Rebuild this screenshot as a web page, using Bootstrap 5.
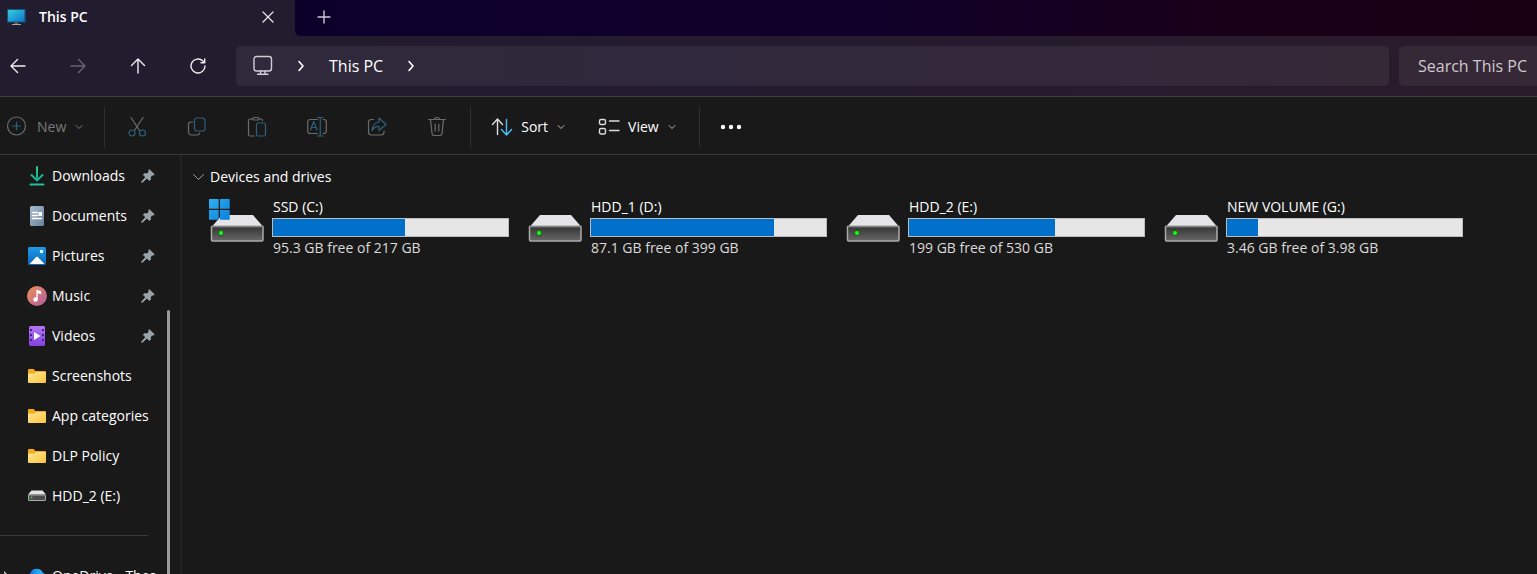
<!DOCTYPE html>
<html lang="en" data-bs-theme="dark">
<head>
<meta charset="utf-8">
<meta name="viewport" content="width=device-width, initial-scale=1">
<title>This PC</title>
<link href="https://cdn.jsdelivr.net/npm/bootstrap@5.3.0/dist/css/bootstrap.min.css" rel="stylesheet">
<style>
  body { font-family: "Open Sans", "Noto Sans", sans-serif; font-size: 14px; line-height: 20px; color: #fff; background: #191919; }
  svg { display: block; flex: none; fill: none; stroke-linecap: round; stroke-linejoin: round; }
  button, .crumb { border: 0; padding: 0; background: none; color: inherit; text-decoration: none; }
  .window-top { background: linear-gradient(90deg, #211d2e 0%, #241b30 45%, #2a1b2a 100%); border-bottom: 1px solid #403f42; }
  .tab-strip { height: 36px; }
  .tab-item { width: 295px; padding: 0 20px 3px 7px; font-weight: 600; }
  .tab-item svg { stroke-width: 1.2; }
  .tab-rest { background: linear-gradient(90deg, #0c002a 0%, #10002a 45%, #190019 75%, #180012 100%); border-bottom-left-radius: 5px; padding: 0 22px 2px; }
  .nav-row { height: 60px; gap: 10px; }
  .nav-tools { width: 226px; padding-left: 7px; gap: 38px; }
  .field { background: rgba(255,255,255,.06); border-radius: 5px; height: 40px; font-size: 16px; }
  .address { padding: 0 0 0 16px; gap: 20px; }
  .search-box { width: 138px; border-radius: 5px 0 0 5px; border: 0; padding: 0 0 0 19px; color: #cfcad0; outline: 0; }
  .search-box::placeholder { color: #cfcad0; opacity: 1; }
  .command-bar { height: 58px; padding-top: 3px; border-bottom: 1px solid #3a3a3a; }
  .command-bar button:disabled { color: #7b7b7b; }
  .new-button { padding: 0 16px 0 5px; }
  .rule { width: 1px; height: 40px; background: #303030; }
  .edit-tools { gap: 40px; padding: 0 23px 0 22px; }
  .view-tools { gap: 32px; padding: 0 22px 0 20px; }
  .side { width: 182px; border-right: 2px solid #222; background: #191919; }
  .side-link { height: 40px; padding: 1px 25px 0 27px; gap: 5px; color: #fff; text-decoration: none; white-space: nowrap; }
  .side-link .pin { margin-left: auto; }
  .side-rule { width: 148px; height: 1px; margin: 20px 0 19px; background: #3a3a3a; }
  .side .cloud { padding-left: 4px; padding-right: 0; width: 159px; overflow: hidden; }
  .thumb { top: 155px; right: 10px; bottom: 0; width: 3px; background: #9a9a9a; border-radius: 2px 2px 0 0; }
  .pane { padding: 12px 10px; }
  .group-title { font-size: 14px; line-height: 20px; font-weight: 400; margin: 0 0 10px; }
  .group-title button { gap: 5px; }
  .drive-list { padding-left: 17px; row-gap: 10px; }
  .drive { width: 318px; gap: 7px; padding-right: 18px; }
  .drive > svg { margin-top: 2px; }
  .drive-text { padding-left: 1px; }
  .meter { height: 19px; margin: 1px 0; border: 1px solid #bcbcbc; border-radius: 0; background: #e6e6e6; }
  .meter .progress-bar { background: #0070cb; }
  .free { color: #dadada; }
</style>
</head>
<body class="vh-100 overflow-hidden d-flex flex-column">

<svg width="0" height="0" class="position-absolute" aria-hidden="true">
  <defs>
    <linearGradient id="gFront" x1="0" y1="0" x2="0" y2="1"><stop offset="0" stop-color="#343434"/><stop offset="1" stop-color="#686868"/></linearGradient>
    <linearGradient id="gWin" x1="0" y1="0" x2="1" y2="1"><stop offset="0" stop-color="#2eb1f0"/><stop offset="1" stop-color="#0a7fdc"/></linearGradient>
    <linearGradient id="gScreen" x1="0" y1="0" x2="1" y2="1"><stop offset="0" stop-color="#35d4e2"/><stop offset="1" stop-color="#0d71c8"/></linearGradient>
    <linearGradient id="gFolder" x1="0" y1="0" x2="1" y2="1"><stop offset="0" stop-color="#ffe79a"/><stop offset="1" stop-color="#fcc43c"/></linearGradient>
    <linearGradient id="gDoc" x1="0" y1="0" x2="1" y2="1"><stop offset="0" stop-color="#a9bccf"/><stop offset="1" stop-color="#67829d"/></linearGradient>
    <linearGradient id="gPic" x1="0" y1="0" x2="0" y2="1"><stop offset="0" stop-color="#1c9be6"/><stop offset="1" stop-color="#0b66bd"/></linearGradient>
    <linearGradient id="gMusic" x1="0" y1="0" x2="1" y2="1"><stop offset="0" stop-color="#f5924f"/><stop offset="1" stop-color="#ab5ba8"/></linearGradient>
    <linearGradient id="gVideo" x1="0" y1="0" x2="0" y2="1"><stop offset="0" stop-color="#b276f2"/><stop offset="1" stop-color="#8140e0"/></linearGradient>
    <linearGradient id="gDown" x1="0" y1="0" x2="0" y2="1"><stop offset="0" stop-color="#2bd08a"/><stop offset="1" stop-color="#17a99a"/></linearGradient>
    <linearGradient id="gCloud" x1="0" y1="0" x2="1" y2="0"><stop offset="0" stop-color="#1558c8"/><stop offset=".5" stop-color="#22a0f0"/><stop offset="1" stop-color="#35b8fa"/></linearGradient>
  </defs>
  <symbol id="drive" viewBox="0 0 56 44">
    <path d="M13 16h31l10 11.500H3z" fill="#e3e3e8"/>
    <path d="M2.500 27.500h51.500v13.500q0 1-1 1h-49.500q-1 0-1-1z" fill="url(#gFront)" stroke="#aaa" stroke-width="1.500"/>
    <path d="M3 27.300h50.500" stroke="#777" stroke-width="1"/>
    <circle cx="12" cy="34" r="3" fill="#176c17"/><circle cx="12" cy="34" r="2" fill="#2af02a"/>
  </symbol>
  <symbol id="pin" viewBox="0 0 14 14">
    <path d="M8.500.8l4.700 4.700-1.200.6-.7-.1-2 2 .1 2.500-1 1-2.500-2.400L1.600 13l-.9.400.3-1L4.700 8.200 2.400 5.800l1-1 2.600.1 2-2-.1-.8z" fill="#9aa4ab" stroke="#9aa4ab"/>
  </symbol>
  <symbol id="folder" viewBox="0 0 20 20">
    <path d="M1 5V4q0-1 1-1h4.500L8.500 5H18q1 0 1 1v2H1z" fill="#f5ab14"/>
    <path d="M1 7.500h6.500L9 6h10v10q0 1-1 1H2q-1 0-1-1z" fill="url(#gFolder)"/>
  </symbol>
  <symbol id="chev" viewBox="0 0 8 6"><path d="M1 1.500l3 3 3-3"/></symbol>
</svg>

<header class="window-top">
  <div class="tab-strip d-flex">
    <div class="tab-item d-flex align-items-center">
      <svg width="20" height="18" viewBox="0 0 20 18"><rect x=".5" y="1.500" width="17.500" height="12.500" fill="url(#gScreen)" stroke="#14567f"/><path d="M7.500 14.500h3.500v1.500h-3.500z" fill="#62696e"/><path d="M5.500 16.500h8" stroke="#a4abb0"/></svg>
      <span class="ms-2 ps-1">This PC</span>
      <button type="button" class="ms-auto" aria-label="Close tab"><svg width="14" height="14" viewBox="0 0 14 14" stroke="#e8e8e8"><path d="M2 2l10 10M12 2L2 12"/></svg></button>
    </div>
    <div class="tab-rest flex-grow-1 d-flex align-items-center">
      <button type="button" aria-label="New tab"><svg width="14" height="14" viewBox="0 0 14 14" stroke="#cfcad6" stroke-width="1.400"><path d="M7 1v12M1 7h12"/></svg></button>
    </div>
  </div>
  <div class="nav-row d-flex align-items-center">
    <nav class="nav-tools d-flex flex-shrink-0" aria-label="History">
      <button type="button" aria-label="Back"><svg width="22" height="22" viewBox="0 0 22 22" stroke="#eee" stroke-width="1.400"><path d="M18 11H4M10.500 4.500L4 11l6.500 6.500"/></svg></button>
      <button type="button" disabled aria-label="Forward"><svg width="22" height="22" viewBox="0 0 22 22" stroke="#67636f" stroke-width="1.400"><path d="M4 11h14M11.500 4.500L18 11l-6.500 6.500"/></svg></button>
      <button type="button" aria-label="Up"><svg width="22" height="22" viewBox="0 0 22 22" stroke="#eee" stroke-width="1.400"><path d="M11 18V4M4.500 10.500L11 4l6.500 6.500"/></svg></button>
      <button type="button" aria-label="Refresh"><svg width="22" height="22" viewBox="0 0 22 22" stroke="#eee" stroke-width="1.400"><path d="M18 11a7 7 0 1 1-2.300-5.200L17.500 7.500M17.700 4v3.700H14"/></svg></button>
    </nav>
    <div class="field address flex-grow-1 d-flex align-items-center">
      <svg width="21" height="22" viewBox="0 0 21 22" stroke="#cfcdd2" stroke-width="1.400"><rect x="2" y="1.500" width="17.500" height="14.500" rx="2.500"/><path d="M8.500 16v3M13 16v3M5.500 19.300h10.500"/></svg>
      <svg width="16" height="16" viewBox="0 0 16 16" stroke="#fff" stroke-width="1.600"><path d="M6 3.500l4 4.500-4 4.500"/></svg>
      <a href="#" class="crumb">This PC</a>
      <svg width="16" height="16" viewBox="0 0 16 16" stroke="#fff" stroke-width="1.600"><path d="M6 3.500l4 4.500-4 4.500"/></svg>
    </div>
    <input type="text" class="field search-box flex-shrink-0" placeholder="Search This PC" aria-label="Search This PC">
  </div>
</header>

<div class="command-bar d-flex align-items-center flex-shrink-0">
  <button type="button" disabled class="new-button d-flex align-items-center">
    <svg class="me-2" width="24" height="24" viewBox="0 0 24 24" stroke-width="1.200"><circle cx="11.500" cy="11" r="9" stroke="#6c6c6c"/><path d="M11.500 7v8M7.500 11h8" stroke="#2d607c"/></svg>
    <span>New</span>
    <svg class="ms-2" width="10" height="6" stroke="#7b7b7b"><use href="#chev"/></svg>
  </button>
  <div class="rule ms-1"></div>
  <div class="edit-tools d-flex">
    <button type="button" disabled aria-label="Cut"><svg width="20" height="22" viewBox="0 0 20 22" stroke-width="1.200"><path d="M4 1.500l8.500 13M16 1.500L7.500 14.500" stroke="#6c6c6c"/><circle cx="5" cy="17" r="3" stroke="#2d607c"/><circle cx="15.500" cy="17" r="3" stroke="#2d607c"/></svg></button>
    <button type="button" disabled aria-label="Copy"><svg width="20" height="22" viewBox="0 0 20 22" stroke-width="1.200"><path d="M5.500 6H4Q1.500 6 1.500 8.500v7Q1.500 19 5 19h5.500q1.500 0 2-2" stroke="#6c6c6c"/><rect x="7.500" y="2" width="10.500" height="13" rx="2.500" stroke="#2d607c"/></svg></button>
    <button type="button" disabled aria-label="Paste"><svg width="20" height="22" viewBox="0 0 20 22" stroke-width="1.200"><path d="M7 20H3q-1.500 0-1.500-1.500V4.500Q1.500 3 3 3h2.500M12 3h2q1.500 0 1.500 1.500M7 1.500h4q1 0 1 1t-1 1.500H7Q5.500 4 5.500 3t1.500-1.500z" stroke="#6c6c6c"/><rect x="9.500" y="7" width="9" height="13" rx="1.500" stroke="#2d607c"/></svg></button>
    <button type="button" disabled aria-label="Rename"><svg width="20" height="22" viewBox="1 0 20 22" stroke-width="1.200"><path d="M11.500 3.500H4.200Q1.700 3.500 1.700 6v9q0 2.500 2.500 2.500h7.300M17 3.500h.8q2.500 0 2.500 2.500v9q0 2.500-2.500 2.500H17" stroke="#6c6c6c"/><path d="M11.500 1.500h5.500M11.500 20H17M14.250 1.500V20M4.500 14l3.200-8.500L11 14M5.500 11.500H10" stroke="#2d607c"/></svg></button>
    <button type="button" disabled aria-label="Share"><svg width="20" height="22" viewBox="0 0 20 22" stroke-width="1.200"><path d="M6.500 3.500H4.500Q1.500 3.500 1.500 6.500v9.500q0 3 3 3H14q3 0 3-3v-1" stroke="#6c6c6c"/><path d="M12 2l7 6.500-7 6v-4q-4-.5-7 4 .5-7.500 7-8.500z" stroke="#2d607c"/></svg></button>
    <button type="button" disabled aria-label="Delete"><svg width="20" height="22" viewBox="0 0 20 22" stroke="#6c6c6c" stroke-width="1.200"><path d="M1.500 3.500h17M3.500 3.500l1.500 14q.2 2 2 2h6q1.800 0 2-2l1.500-14M7.500 3.500q0-2 2.500-2t2.500 2M8.200 8v7M11.800 8v7"/></svg></button>
  </div>
  <div class="rule"></div>
  <div class="view-tools d-flex">
    <button type="button" class="d-flex align-items-center">
      <svg width="22" height="20" viewBox="0 0 22 20" stroke-width="1.400"><path d="M6.500 17.500V2.500M1.500 7.500l5-5.500 5 5.500" stroke="#ddd"/><path d="M15.500 2.500v15M10.500 12.500l5 5.500 5-5.500" stroke="#4cbff5"/></svg>
      <span class="ms-2">Sort</span><svg class="ms-2" width="10" height="6" stroke="#bbb"><use href="#chev"/></svg>
    </button>
    <button type="button" class="d-flex align-items-center">
      <svg width="22" height="20" viewBox="0 0 22 20" stroke="#ddd" stroke-width="1.400"><rect x="1.500" y="2.500" width="6" height="5" rx="1.500"/><rect x="1.500" y="11.500" width="6" height="5.500" rx="1.500"/><path d="M11.500 4H21M11.500 13.500H21"/></svg>
      <span class="ms-2">View</span><svg class="ms-2" width="10" height="6" stroke="#bbb"><use href="#chev"/></svg>
    </button>
  </div>
  <div class="rule"></div>
  <button type="button" class="ms-3 ps-1" aria-label="See more"><svg width="22" height="20" viewBox="0 0 22 20"><circle cx="3" cy="10" r="2.200" fill="#fff"/><circle cx="11" cy="10" r="2.200" fill="#fff"/><circle cx="19" cy="10" r="2.200" fill="#fff"/></svg></button>
</div>

<div class="d-flex flex-grow-1 overflow-hidden">
  <nav class="side flex-shrink-0 position-relative overflow-hidden" aria-label="Folders">
    <a href="#" class="side-link d-flex align-items-center"><svg width="20" height="20" viewBox="0 0 20 20" stroke="url(#gDown)" stroke-width="2"><path d="M10 1l.01 13M4.500 9l5.500 5.500L15.500 9"/><path d="M3.500 18.500h13v.01" stroke="#22c296"/></svg>Downloads<svg class="pin" width="14" height="14"><use href="#pin"/></svg></a>
    <a href="#" class="side-link d-flex align-items-center"><svg width="20" height="20" viewBox="0 0 20 20"><rect x="3" width="14" height="20" rx="1.500" fill="url(#gDoc)"/><path d="M5.500 6.500h5M5.500 9.500h5M5.500 12.500h9" stroke="#fff" stroke-width="1.400"/><rect x="11.500" y="6" width="3.500" height="4" fill="#fff"/></svg>Documents<svg class="pin" width="14" height="14"><use href="#pin"/></svg></a>
    <a href="#" class="side-link d-flex align-items-center"><svg width="20" height="20" viewBox="0 0 20 20"><rect x="1" y="1" width="18" height="18" rx="1.500" fill="url(#gPic)"/><path d="M2.500 18l6.700-7q.8-.8 1.600 0l6.700 7z" fill="#fff"/><circle cx="14.500" cy="5.500" r="1.700" fill="#fff"/></svg>Pictures<svg class="pin" width="14" height="14"><use href="#pin"/></svg></a>
    <a href="#" class="side-link d-flex align-items-center"><svg width="20" height="20" viewBox="0 0 20 20"><circle cx="10" cy="10" r="10" fill="url(#gMusic)"/><circle cx="8.500" cy="13.500" r="2.200" fill="#fff"/><path d="M10 13.500V4.500l3.500 1.200v1.800L10.500 6.500" stroke="#fff" stroke-width="1.300" fill="#fff"/></svg>Music<svg class="pin" width="14" height="14"><use href="#pin"/></svg></a>
    <a href="#" class="side-link d-flex align-items-center"><svg width="20" height="20" viewBox="0 0 20 20"><rect x="2" width="16" height="20" rx="1.500" fill="url(#gVideo)"/><path d="M4 3v15M16 3v15" stroke="#4a1c94" stroke-width="2" stroke-dasharray="2 3" stroke-linecap="butt"/><path d="M7 6l6.500 4L7 14z" fill="#fff"/></svg>Videos<svg class="pin" width="14" height="14"><use href="#pin"/></svg></a>
    <a href="#" class="side-link d-flex align-items-center"><svg width="20" height="20"><use href="#folder"/></svg>Screenshots</a>
    <a href="#" class="side-link d-flex align-items-center"><svg width="20" height="20"><use href="#folder"/></svg>App categories</a>
    <a href="#" class="side-link d-flex align-items-center"><svg width="20" height="20"><use href="#folder"/></svg>DLP Policy</a>
    <a href="#" class="side-link d-flex align-items-center"><svg width="20" height="20" viewBox="0 0 20 20"><path d="M4.500 4.500h11l3.500 4H1z" fill="#e3e3e6"/><rect x="1.500" y="9" width="17" height="5.500" rx=".5" fill="#4c4c4c" stroke="#aaa"/><circle cx="4.500" cy="11.500" r="1" fill="#2be02b"/></svg>HDD_2 (E:)</a>
    <div class="side-rule"></div>
    <a href="#" class="side-link cloud d-flex align-items-center"><svg width="18" height="14" viewBox="2 0 18 14" stroke="#ccc" stroke-width="1.500"><path d="M1 2l5 5-5 5"/></svg><svg width="20" height="20" viewBox="0 0 20 20"><path d="M4 16a4.500 4.500 0 0 1-1-8.500A7 7 0 0 1 16 7a4.700 4.700 0 0 1 0 9z" fill="url(#gCloud)"/></svg>OneDrive - Thes</a>
    <div class="thumb position-absolute"></div>
  </nav>

  <main class="pane flex-grow-1">
    <h1 class="group-title"><button type="button" class="d-flex align-items-center"><svg width="13" height="10" viewBox="0 0 13 10" stroke="#a0a0a0"><path d="M1.500 2.500l5 5 5-5"/></svg>Devices and drives</button></h1>
    <div class="drive-list d-flex flex-wrap">
      <div class="drive d-flex">
        <svg width="56" height="44"><use href="#drive"/><path d="M0 0h9.700v9.700H0zM11 0h9.700v9.700H11zM0 11h9.700v9.700H0zM11 11h9.700v9.700H11z" fill="url(#gWin)"/></svg>
        <div class="flex-grow-1"><div id="c" class="drive-text">SSD (C:)</div><div class="progress meter" role="progressbar" aria-labelledby="c" aria-valuenow="56"><div class="progress-bar" style="width:56%"></div></div><div class="drive-text free">95.3 GB free of 217 GB</div></div>
      </div>
      <div class="drive d-flex">
        <svg width="56" height="44"><use href="#drive"/></svg>
        <div class="flex-grow-1"><div id="d" class="drive-text">HDD_1 (D:)</div><div class="progress meter" role="progressbar" aria-labelledby="d" aria-valuenow="78"><div class="progress-bar" style="width:78%"></div></div><div class="drive-text free">87.1 GB free of 399 GB</div></div>
      </div>
      <div class="drive d-flex">
        <svg width="56" height="44"><use href="#drive"/></svg>
        <div class="flex-grow-1"><div id="e" class="drive-text">HDD_2 (E:)</div><div class="progress meter" role="progressbar" aria-labelledby="e" aria-valuenow="62"><div class="progress-bar" style="width:62%"></div></div><div class="drive-text free">199 GB free of 530 GB</div></div>
      </div>
      <div class="drive d-flex">
        <svg width="56" height="44"><use href="#drive"/></svg>
        <div class="flex-grow-1"><div id="g" class="drive-text">NEW VOLUME (G:)</div><div class="progress meter" role="progressbar" aria-labelledby="g" aria-valuenow="13"><div class="progress-bar" style="width:13%"></div></div><div class="drive-text free">3.46 GB free of 3.98 GB</div></div>
      </div>
    </div>
  </main>
</div>
<script src="https://cdn.jsdelivr.net/npm/bootstrap@5.3.0/dist/js/bootstrap.bundle.min.js"></script>
</body>
</html>
